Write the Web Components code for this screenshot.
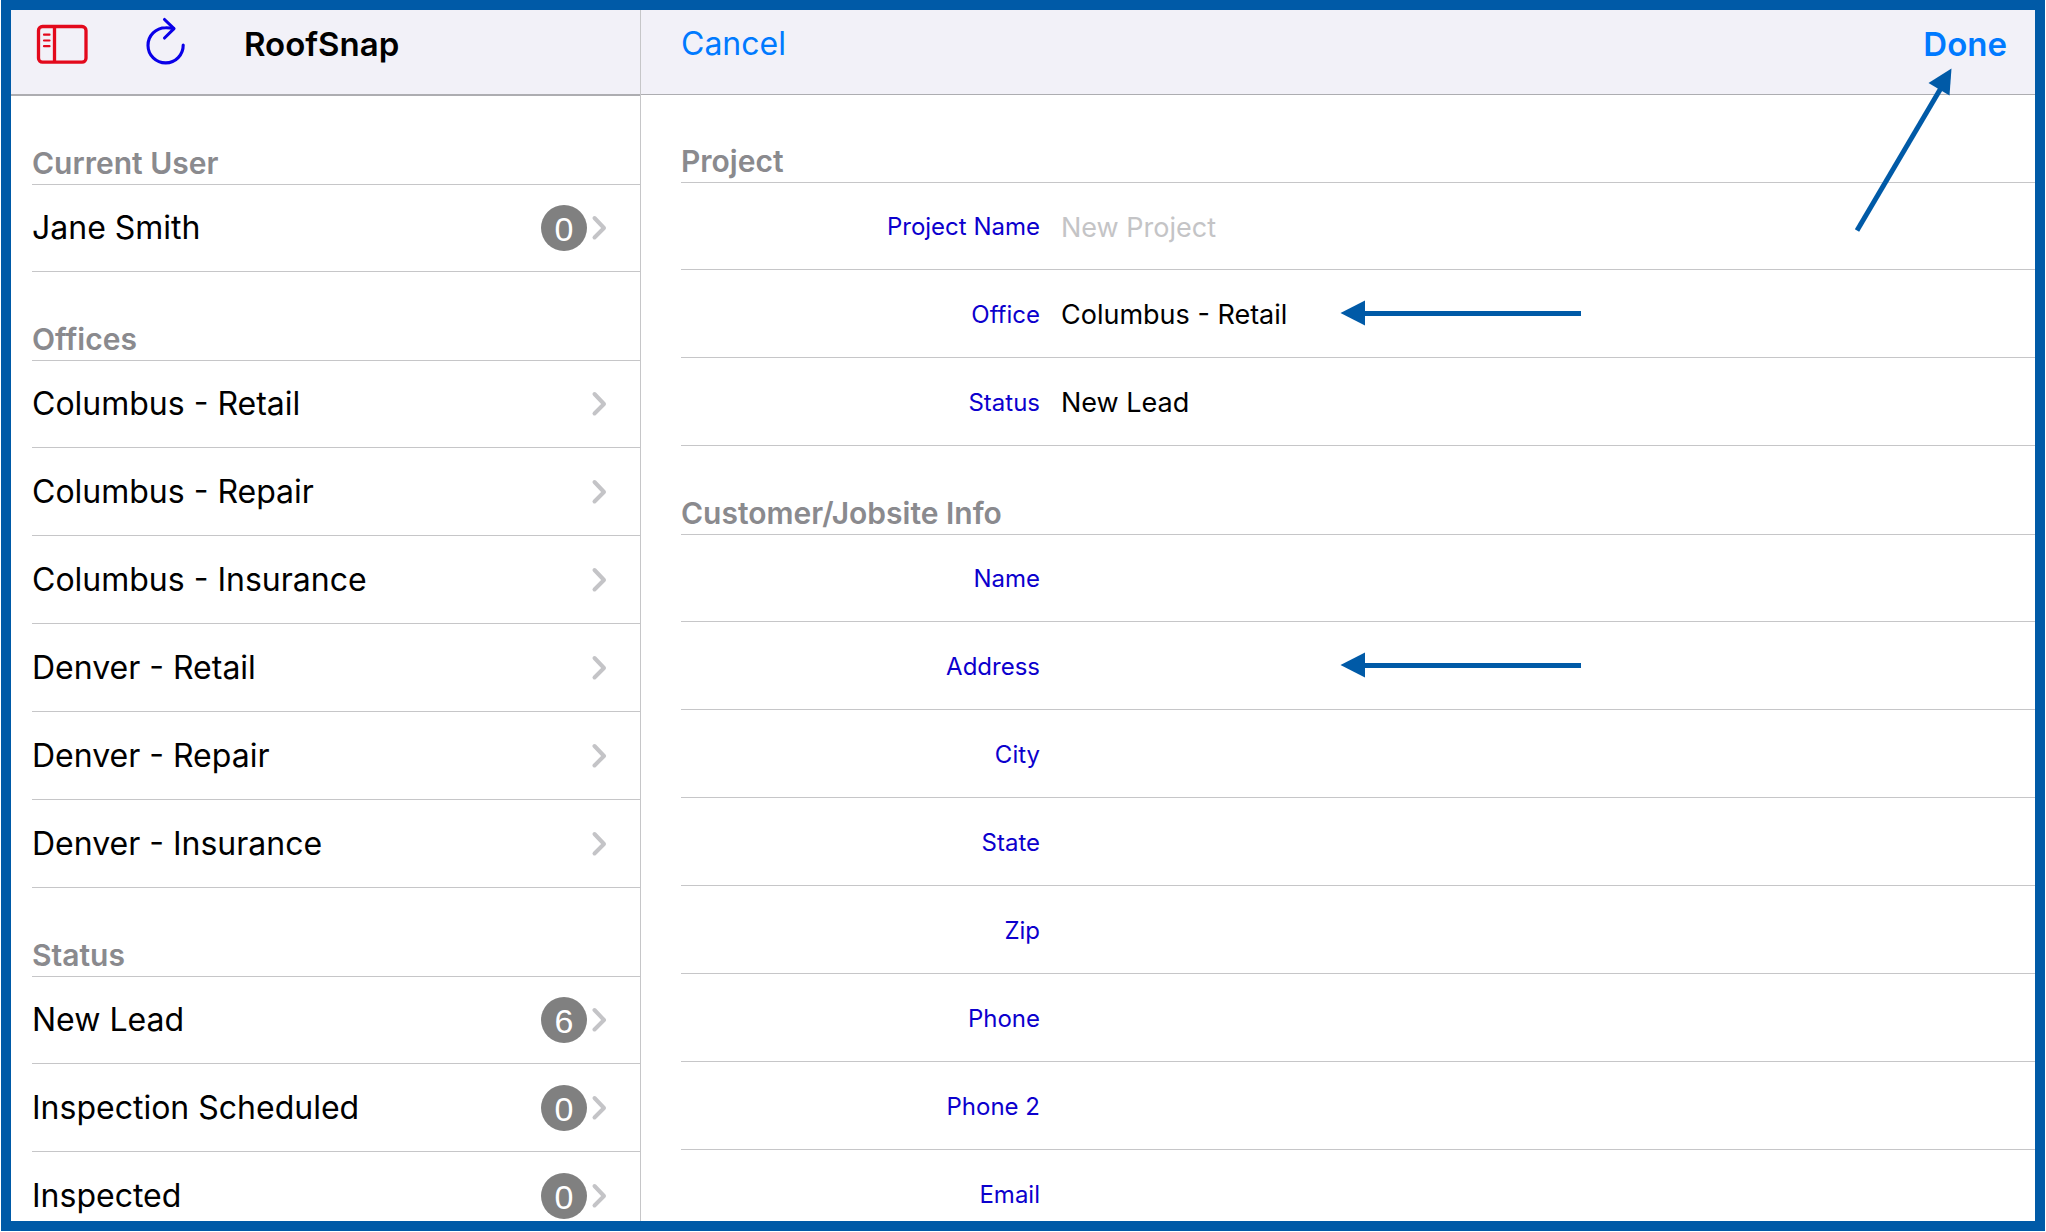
<!DOCTYPE html>
<html lang="en">
<head>
<meta charset="utf-8">
<title>RoofSnap</title>
<style>
html,body{margin:0;height:100%;background:#fff}
body{font-family:Inter,"Liberation Sans",sans-serif;color:#000;overflow:hidden}
</style>
</head>
<body>
<roof-app></roof-app>
<script>
const define = (name, render) => customElements.define(name, class extends HTMLElement {
  connectedCallback() {
    if (this.shadowRoot) return;
    this.attachShadow({mode: 'open'}).innerHTML = render(this);
  }
});

const base = `*{box-sizing:border-box}:host{box-sizing:border-box}`;

/* Top bar: buttons and title go into the slot */
define('nav-bar', () => `
<style>${base}
:host{display:flex;align-items:flex-start;flex:none;height:85px;padding:0 28px 0 30px;background:#f2f1f8;border-bottom:1px solid #adadb1}
:host([thick]){height:86px;border-bottom-width:2px;padding:0 25px}
</style><slot></slot>`);

define('nav-button', el => `
<style>${base}
:host{display:block}
button{all:unset;display:block;font-size:32px;line-height:68px;color:#007aff;cursor:pointer}
:host([strong]) button{font-size:33px;font-weight:600}
::slotted(svg){display:block}
</style><button type="button"${el.getAttribute('label') ? ` aria-label="${el.getAttribute('label')}"` : ''}><slot></slot></button>`);

define('group-title', () => `
<style>${base}
:host{display:block;height:89px;padding-top:48px;border-bottom:1px solid #c6c6c8}
:host([compact]){height:88px;padding-top:47px}
h2{margin:0;font-size:30px;line-height:38px;font-weight:600;color:#8a8a8e}
</style><h2><slot></slot></h2>`);

define('list-row', el => `
<style>${base}
:host{display:block;height:88px;border-bottom:1px solid #c6c6c8}
:host([first]){height:87px}
a{display:flex;align-items:center;height:100%;padding-right:33px;color:inherit;text-decoration:none;font-size:32px;line-height:44px}
.name{flex:1}
.count{width:46px;height:46px;margin-right:4px;border-radius:50%;background:#808080;color:#fff;font-family:"Liberation Sans",sans-serif;font-size:34px;text-align:center;line-height:48px}
svg{flex:none;display:block}
</style>
<a href="#"><span class="name"><slot></slot></span>${el.hasAttribute('count') ? `<span class="count">${el.getAttribute('count')}</span>` : ''}
<svg width="16" height="26" viewBox="0 0 16 26" fill="none" stroke="#c4c4c7" stroke-width="4" stroke-linecap="round" stroke-linejoin="round"><path d="M3.500 3 13 13 3.500 22.500"/></svg></a>`);

define('form-field', el => `
<style>${base}
:host{display:flex;align-items:center;position:relative;height:88px;padding-top:2px;border-bottom:1px solid #c6c6c8}
:host([first]){height:87px}
label{flex:none;width:359px;text-align:right;font-size:24px;line-height:32px;color:#0c00cd}
input{flex:1;min-width:0;height:48px;margin:0 0 0 21px;padding:0;border:0;outline:0;background:none;font:inherit;font-size:27px;color:#000}
input::placeholder{color:#c4c4c6;opacity:1}
::slotted(*){position:absolute;left:658px;top:30px}
</style>
<label for="f">${el.getAttribute('label')}</label>
<input id="f" type="text" value="${el.getAttribute('value') || ''}" placeholder="${el.getAttribute('placeholder') || ''}"><slot></slot>`);

/* Callout arrows */
define('pointer-arrow', el => el.hasAttribute('diagonal') ? `
<style>:host{display:block}svg{display:block}</style>
<svg width="102" height="170" viewBox="0 0 102 170"><path d="M5 165.500 89 23" stroke="#005aa7" stroke-width="5"/><path d="M99.500 3.500 76.500 18 97.500 30.500Z" fill="#005aa7"/></svg>` : `
<style>:host{display:block}svg{display:block}</style>
<svg width="244" height="26" viewBox="0 0 244 26"><path d="M24 13.500H242" stroke="#005aa7" stroke-width="5"/><path d="M1.500 13 26 .5v25Z" fill="#005aa7"/></svg>`);

define('side-pane', () => {
  const rows = items => items.map(([name, count], i) =>
    `<list-row${i ? '' : ' first'}${count === undefined ? '' : ` count="${count}"`}>${name}</list-row>`).join('');
  return `
<style>${base}
:host{display:flex;flex-direction:column;flex:none;width:630px;border-right:1px solid #c6c6c8;overflow:hidden}
.list{padding-left:21px}
h1{margin:0 0 0 58px;font-size:33px;line-height:68px;font-weight:600}
.reload{margin-left:56px}
</style>
<nav-bar thick>
<nav-button label="Toggle sidebar"><svg width="54" height="68" viewBox="36 10 54 68" fill="none" stroke="#e3091c" stroke-width="3.300"><rect x="38.500" y="26.500" width="47.500" height="35.700" rx="4"/><path d="M54.500 26v36"/><path d="M44 34.700h5.500M44 40.500h5.500M44 46.200h5.500" stroke-width="2.200" stroke-linecap="round"/></svg></nav-button>
<nav-button class="reload" label="Reload"><svg width="40" height="68" viewBox="146 10 40 68" fill="none" stroke="#0a00e8" stroke-width="3.100" stroke-linecap="round" stroke-linejoin="round"><path d="M183.200 45A17.600 17.600 0 1 1 165.600 27.700Q169 27.600 173.500 28.600"/><path d="M164.500 19.500 174 28.700 164.500 38"/></svg></nav-button>
<h1>RoofSnap</h1>
</nav-bar>
<div class="list">
<group-title>Current User</group-title>${rows([['Jane Smith', 0]])}
<group-title>Offices</group-title>${rows([['Columbus - Retail'], ['Columbus - Repair'], ['Columbus - Insurance'], ['Denver - Retail'], ['Denver - Repair'], ['Denver - Insurance']])}
<group-title>Status</group-title>${rows([['New Lead', 6], ['Inspection Scheduled', 0], ['Inspected', 0]])}
</div>`;
});

define('project-form', () => `
<style>${base}
:host{display:flex;flex-direction:column;flex:1;min-width:0;position:relative;overflow:hidden}
form{padding-left:40px}
.spacer{flex:1}
.done{position:absolute;right:81px;top:55px}
nav-bar{padding-left:40px}
</style>
<nav-bar><nav-button>Cancel</nav-button><span class="spacer"></span><nav-button strong>Done</nav-button></nav-bar>
<form>
<group-title compact>Project</group-title>
<form-field first label="Project Name" placeholder="New Project"></form-field>
<form-field label="Office" value="Columbus - Retail"><pointer-arrow></pointer-arrow></form-field>
<form-field label="Status" value="New Lead"></form-field>
<group-title>Customer/Jobsite Info</group-title>
<form-field first label="Name"></form-field>
<form-field label="Address"><pointer-arrow></pointer-arrow></form-field>
${['City', 'State', 'Zip', 'Phone', 'Phone 2', 'Email'].map(l => `<form-field label="${l}"></form-field>`).join('')}
</form>
<pointer-arrow class="done" diagonal></pointer-arrow>`);

define('roof-app', () => `
<style>${base}
:host{display:flex;height:calc(100vh - 1px);margin:0 1px 1px;border:10px solid #005aa7;overflow:hidden}
</style><side-pane></side-pane><project-form></project-form>`);
</script>
</body>
</html>
